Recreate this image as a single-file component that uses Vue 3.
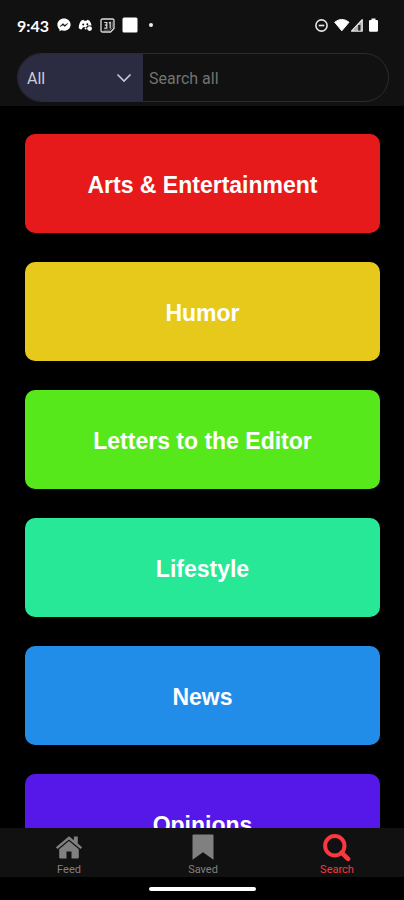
<script setup>
import { ref } from 'vue'

const scope = ref('All')
const query = ref('')
const active = ref('Search')

const categories = [
  { name: 'Arts & Entertainment', color: '#e71a1b' },
  { name: 'Humor', color: '#e6c91a' },
  { name: 'Letters to the Editor', color: '#56e81b' },
  { name: 'Lifestyle', color: '#27e896' },
  { name: 'News', color: '#218de8' },
  { name: 'Opinions', color: '#5618e8' },
]
</script>

<template>
  <div class="app">
    <header class="header">
      <div class="status">
        <span class="time">9:43</span>
        <svg class="icon" width="14" height="14" viewBox="0 0 14 14" aria-hidden="true">
          <path d="M7 .6C3.300.6.4 3.200.4 6.700c0 1.900.8 3.500 2.100 4.600v2l1.900-1c.8.3 1.700.4 2.600.4 3.700 0 6.600-2.600 6.600-6S10.700.6 7 .6z" fill="#fff" />
          <path d="M3 8.600l2.900-3 1.900 1.600 3-1.800-2.800 3.100-2-1.600z" fill="#111" stroke="#111" stroke-width=".5" />
        </svg>
        <svg class="icon" width="15" height="14" viewBox="0 0 15 14" aria-hidden="true">
          <path d="M3.400 2.400L5.500 1.800l.6.9h2.500l.6-.9 2.100.6c1.300 1.600 2 3.400 2.200 5.200H9.300L8.200 9.300H5l-1.500 2.300C2.300 11.300 1.300 10.700.7 10c0-3 .9-5.600 2.700-7.600z" fill="#fff" />
          <circle cx="5.200" cy="6.500" r="1" fill="#111" />
          <circle cx="9.300" cy="6.300" r="1" fill="#111" />
          <circle cx="11.600" cy="10.600" r="2.400" fill="#fff" />
          <circle cx="7.600" cy="10.500" r="1" fill="#fff" />
        </svg>
        <svg class="icon" width="15" height="15" viewBox="0 0 15 15" aria-hidden="true">
          <path d="M2.500 1h10q1.500 0 1.500 1.500v8L10.500 14h-8Q1 14 1 12.500v-10Q1 1 2.500 1z" fill="none" stroke="#ddd" stroke-width="1.300" />
          <path d="M4.200 4.500h2.600v5.600H4.200M4.800 7.200h2M8.800 5l1.400-.6v6.200" fill="none" stroke="#ddd" stroke-width="1.200" />
          <path d="M3.500 12.200h6.200l2.500-2.500V3.500" fill="none" stroke="#888" stroke-width=".8" />
        </svg>
        <svg class="icon" width="16" height="16" viewBox="0 0 16 16" aria-hidden="true">
          <rect x=".5" y=".5" width="15" height="15" rx="1.500" fill="#fff" />
        </svg>
        <span class="dot"></span>
        <svg class="system" width="66" height="16" viewBox="0 0 66 16" aria-hidden="true">
          <circle cx="7.500" cy="8.500" r="5.600" fill="none" stroke="#e4e4e4" stroke-width="1.600" />
          <path d="M4.700 8.500h5.600" stroke="#e4e4e4" stroke-width="1.700" />
          <path d="M20.700 5.200Q27.800-.4 35 5.200L27.800 13.800z" fill="#fff" stroke="#fff" stroke-linejoin="round" />
          <path d="M37.500 14.100L48.200 2.800v11.300z" fill="#aaa" stroke="#e8e8e8" stroke-width="1.300" stroke-linejoin="round" />
          <path d="M44.200 8v5.600h2.200V8z" fill="#222" />
          <path d="M57.500 1.500h4v1.400h1.400q1.100 0 1.100 1.100v9.500q0 1.300-1.300 1.300h-6.400q-1.300 0-1.300-1.300V4q0-1.100 1.100-1.100h1.400z" fill="#fff" />
        </svg>
      </div>

      <form class="search" role="search" @submit.prevent>
        <div class="scope">
          <select v-model="scope" class="select" aria-label="Category">
            <option>All</option>
            <option v-for="c in categories" :key="c.name">{{ c.name }}</option>
          </select>
          <svg class="chevron" width="16" height="10" viewBox="0 0 16 10" aria-hidden="true">
            <path d="M1.500 1.500L8 8l6.500-6.500" fill="none" stroke="#c9c9d6" stroke-width="1.600" />
          </svg>
        </div>
        <input v-model="query" class="query" type="text" placeholder="Search all" aria-label="Search all" />
      </form>
    </header>

    <main class="list">
      <button
        v-for="c in categories"
        :key="c.name"
        type="button"
        class="card"
        :style="{ backgroundColor: c.color }"
      >{{ c.name }}</button>
    </main>

    <nav class="tabs">
      <a href="#feed" class="tab" :class="{ active: active === 'Feed' }" @click.prevent="active = 'Feed'">
        <svg width="28" height="30" viewBox="0 0 28 30" fill="currentColor" aria-hidden="true">
          <path d="M14 3.300L.9 14.200l1.600 1.900L14 6.600l11.500 9.500 1.600-1.900-4.300-3.600V3.400h-3.900v3.900z" />
          <path d="M14 8.100l-9.800 8.100v8.300q0 1 1 1h6.300v-6.900h5v6.900h6.300q1 0 1-1v-8.300z" />
        </svg>
        <span>Feed</span>
      </a>
      <a href="#saved" class="tab" :class="{ active: active === 'Saved' }" @click.prevent="active = 'Saved'">
        <svg width="28" height="30" viewBox="0 0 28 30" fill="currentColor" aria-hidden="true">
          <path d="M4.500 1.500h19q1 0 1 1v24.300L14 19.200 3.500 26.800V2.500q0-1 1-1z" />
        </svg>
        <span>Saved</span>
      </a>
      <a href="#search" class="tab" :class="{ active: active === 'Search' }" @click.prevent="active = 'Search'">
        <svg width="28" height="30" viewBox="0 0 28 30" fill="none" stroke="currentColor" aria-hidden="true">
          <circle cx="11.800" cy="12.700" r="9.700" stroke-width="4" />
          <path d="M18.700 19.600l6.300 6.300" stroke-width="4.600" stroke-linecap="round" />
        </svg>
        <span>Search</span>
      </a>
    </nav>
    <div class="gesture"><span class="handle"></span></div>
  </div>
</template>

<style>
body {
  background: #000;
}
</style>

<style scoped>
.app {
  display: flex;
  flex-direction: column;
  height: 100vh;
  overflow: hidden;
  background: #000;
  font-family: Roboto, "Liberation Sans", sans-serif;
}
.header {
  flex: none;
  padding: 13px 15px 4px 17px;
  background: #111;
}
.status {
  display: flex;
  align-items: center;
  gap: 7px;
  height: 24px;
  margin-bottom: 16px;
}
.time {
  width: 33px;
  color: #fff;
  font-family: Lato, Roboto, sans-serif;
  font-size: 16px;
  font-weight: 700;
  white-space: nowrap;
}
.icon {
  flex: none;
}
.dot {
  width: 4px;
  height: 4px;
  margin-left: 4px;
  border-radius: 50%;
  background: #eee;
}
.system {
  flex: none;
  margin-left: auto;
  margin-right: 9px;
}
.search {
  display: flex;
  box-sizing: border-box;
  height: 49px;
  overflow: hidden;
  border: 1px solid #2b2b31;
  border-radius: 25px;
}
.scope {
  display: grid;
  flex: none;
  align-items: center;
  width: 125px;
  background: #2b2c42;
}
.select {
  grid-area: 1 / 1;
  width: 100%;
  height: 100%;
  padding: 2px 36px 0 9px;
  border: 0;
  outline: 0;
  appearance: none;
  background: transparent;
  color: #cbcbd6;
  font: 400 16px Roboto, sans-serif;
}
.chevron {
  grid-area: 1 / 1;
  justify-self: end;
  margin-right: 11px;
  pointer-events: none;
}
.query {
  flex: 1;
  min-width: 0;
  padding: 2px 20px 0 6px;
  border: 0;
  outline: 0;
  background: transparent;
  color: #ddd;
  font: 400 16px Roboto, sans-serif;
}
.query::placeholder {
  color: #737373;
  opacity: 1;
}
.list {
  display: flex;
  flex: 1;
  flex-direction: column;
  gap: 29px;
  min-height: 0;
  overflow: hidden;
  padding: 28px 24px 0 25px;
}
.card {
  flex: none;
  height: 99px;
  padding: 3px 16px 0;
  border: 0;
  border-radius: 10px;
  color: #fff;
  font: 700 23px "Liberation Sans", Arial, sans-serif;
  cursor: pointer;
}
.tabs {
  display: grid;
  flex: none;
  grid-template-columns: repeat(3, 1fr);
  height: 49px;
  padding-left: 2px;
  background: #111;
}
.tab {
  display: flex;
  flex-direction: column;
  align-items: center;
  padding-top: 5px;
  color: #808080;
  font-size: 11px;
  line-height: 14px;
  text-decoration: none;
}
.tab.active {
  color: #f9383f;
}
.gesture {
  display: flex;
  flex: none;
  align-items: center;
  justify-content: center;
  height: 23px;
}
.handle {
  width: 107px;
  height: 4px;
  border-radius: 2px;
  background: #fff;
}
</style>
